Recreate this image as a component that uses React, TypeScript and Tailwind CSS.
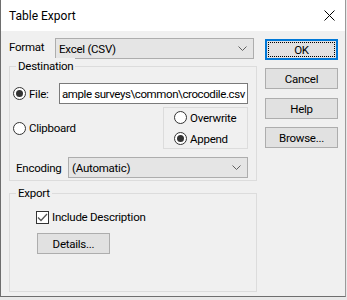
const font = "font-['Roboto','Noto_Sans',sans-serif]";

function Chevron() {
  return (
    <svg width="9" height="5" viewBox="0 0 9 5" className="shrink-0">
      <path d="M0.5 0.5 L4.5 4.5 L8.5 0.5" fill="none" stroke="#606060" strokeWidth="1" />
    </svg>
  );
}

function Combo({ value, className }: { value: string; className: string }) {
  return (
    <div
      className={`flex items-center justify-between border border-[#adadad] bg-[#e5e5e5] pl-[3px] pr-[6px] ${className}`}
    >
      <span>{value}</span>
      <Chevron />
    </div>
  );
}

function Radio({ checked }: { checked?: boolean }) {
  return (
    <span className="flex h-[13px] w-[13px] shrink-0 items-center justify-center rounded-full border border-[#333] bg-white">
      {checked ? <span className="h-[7px] w-[7px] rounded-full bg-[#333]" /> : null}
    </span>
  );
}

function Btn({ label, focused, className = "" }: { label: string; focused?: boolean; className?: string }) {
  if (focused) {
    return (
      <div className={`flex h-[21px] w-[73px] items-center justify-center border-2 border-[#0078d7] bg-[#e1e1e1] p-px ${className}`}>
        <div className="flex h-full w-full items-center justify-center border border-dotted border-black">{label}</div>
      </div>
    );
  }
  return (
    <div className={`flex h-[21px] w-[73px] items-center justify-center border border-[#adadad] bg-[#e1e1e1] ${className}`}>
      {label}
    </div>
  );
}

function Group({ title, className, children }: { title: string; className: string; children: React.ReactNode }) {
  return (
    <div className={`relative border border-[#dcdcdc] ${className}`}>
      <span className="absolute left-[6px] top-[-9px] bg-[#f0f0f0] px-[2px] leading-[16px]">{title}</span>
      {children}
    </div>
  );
}

export default function App() {
  return (
    <div className={`h-[300px] w-[347px] bg-[#e8e8e8] text-[11.5px] leading-[16px] tracking-[-0.25px] text-black ${font}`}>
      <div className="flex h-[297px] w-[346px] flex-col border-x border-b border-l-[#6e6e6e] border-r-[#9a9a9a] border-b-[#6e6e6e] bg-[#f0f0f0]">
        <div className="flex h-[31px] shrink-0 items-center justify-between bg-white pl-[8px] pr-[10px]">
          <span className="text-[12px] tracking-normal">Table Export</span>
          <svg width="11" height="11" viewBox="0 0 11 11">
            <path d="M0.5 0.5 L10.5 10.5 M10.5 0.5 L0.5 10.5" stroke="#000" strokeWidth="1" />
          </svg>
        </div>

        <div className="flex flex-1 pl-[8px] pt-[7px]">
          <div className="flex w-[248px] flex-col">
            <div className="flex h-[21px] items-center">
              <span className="w-[46px] pb-[3px]">Format</span>
              <Combo value="Excel (CSV)" className="h-[21px] w-[199px]" />
            </div>

            <Group title="Destination" className="mt-[7px] h-[115px] pl-[3px] pr-[8px]">
              <div className="mt-[16px] flex h-[21px] items-center">
                <Radio checked />
                <span className="ml-[3px]">File:</span>
                <div className="ml-auto flex h-[21px] w-[189px] items-center overflow-hidden border border-[#7a7a7a] bg-white pl-[2px] tracking-[-0.4px] whitespace-nowrap">
                  ample surveys\common\crocodile.csv
                </div>
              </div>
              <div className="mt-[3px] flex items-center justify-between">
                <div className="flex items-center">
                  <Radio />
                  <span className="ml-[3px]">Clipboard</span>
                </div>
                <div className="flex h-[42px] w-[85px] flex-col justify-center gap-[5px] border border-[#dcdcdc] pl-[10px]">
                  <div className="flex items-center">
                    <Radio />
                    <span className="ml-[3px]">Overwrite</span>
                  </div>
                  <div className="flex items-center">
                    <Radio checked />
                    <span className="ml-[3px]">Append</span>
                  </div>
                </div>
              </div>
              <div className="mt-[8px] flex items-center pl-[3px]">
                <span className="w-[53px]">Encoding</span>
                <Combo value="(Automatic)" className="h-[21px] w-[183px]" />
              </div>
            </Group>

            <Group title="Export" className="mt-[12px] h-[99px] pl-[26px]">
              <div className="mt-[15px] flex items-center">
                <span className="flex h-[13px] w-[13px] items-center justify-center border border-[#333] bg-white">
                  <svg width="11" height="9" viewBox="0 0 11 9">
                    <path d="M1 4.5 L4 7.5 L10 1" fill="none" stroke="#555" strokeWidth="1.3" />
                  </svg>
                </span>
                <span className="ml-[3px]">Include Description</span>
              </div>
              <Btn label="Details..." className="ml-px mt-[8px]" />
            </Group>
          </div>

          <div className="ml-[8px] flex flex-col pt-px">
            <Btn label="OK" focused />
            <Btn label="Cancel" className="mt-[8px]" />
            <Btn label="Help" className="mt-[9px]" />
            <Btn label="Browse..." className="mt-[8px]" />
          </div>
        </div>
      </div>
    </div>
  );
}
